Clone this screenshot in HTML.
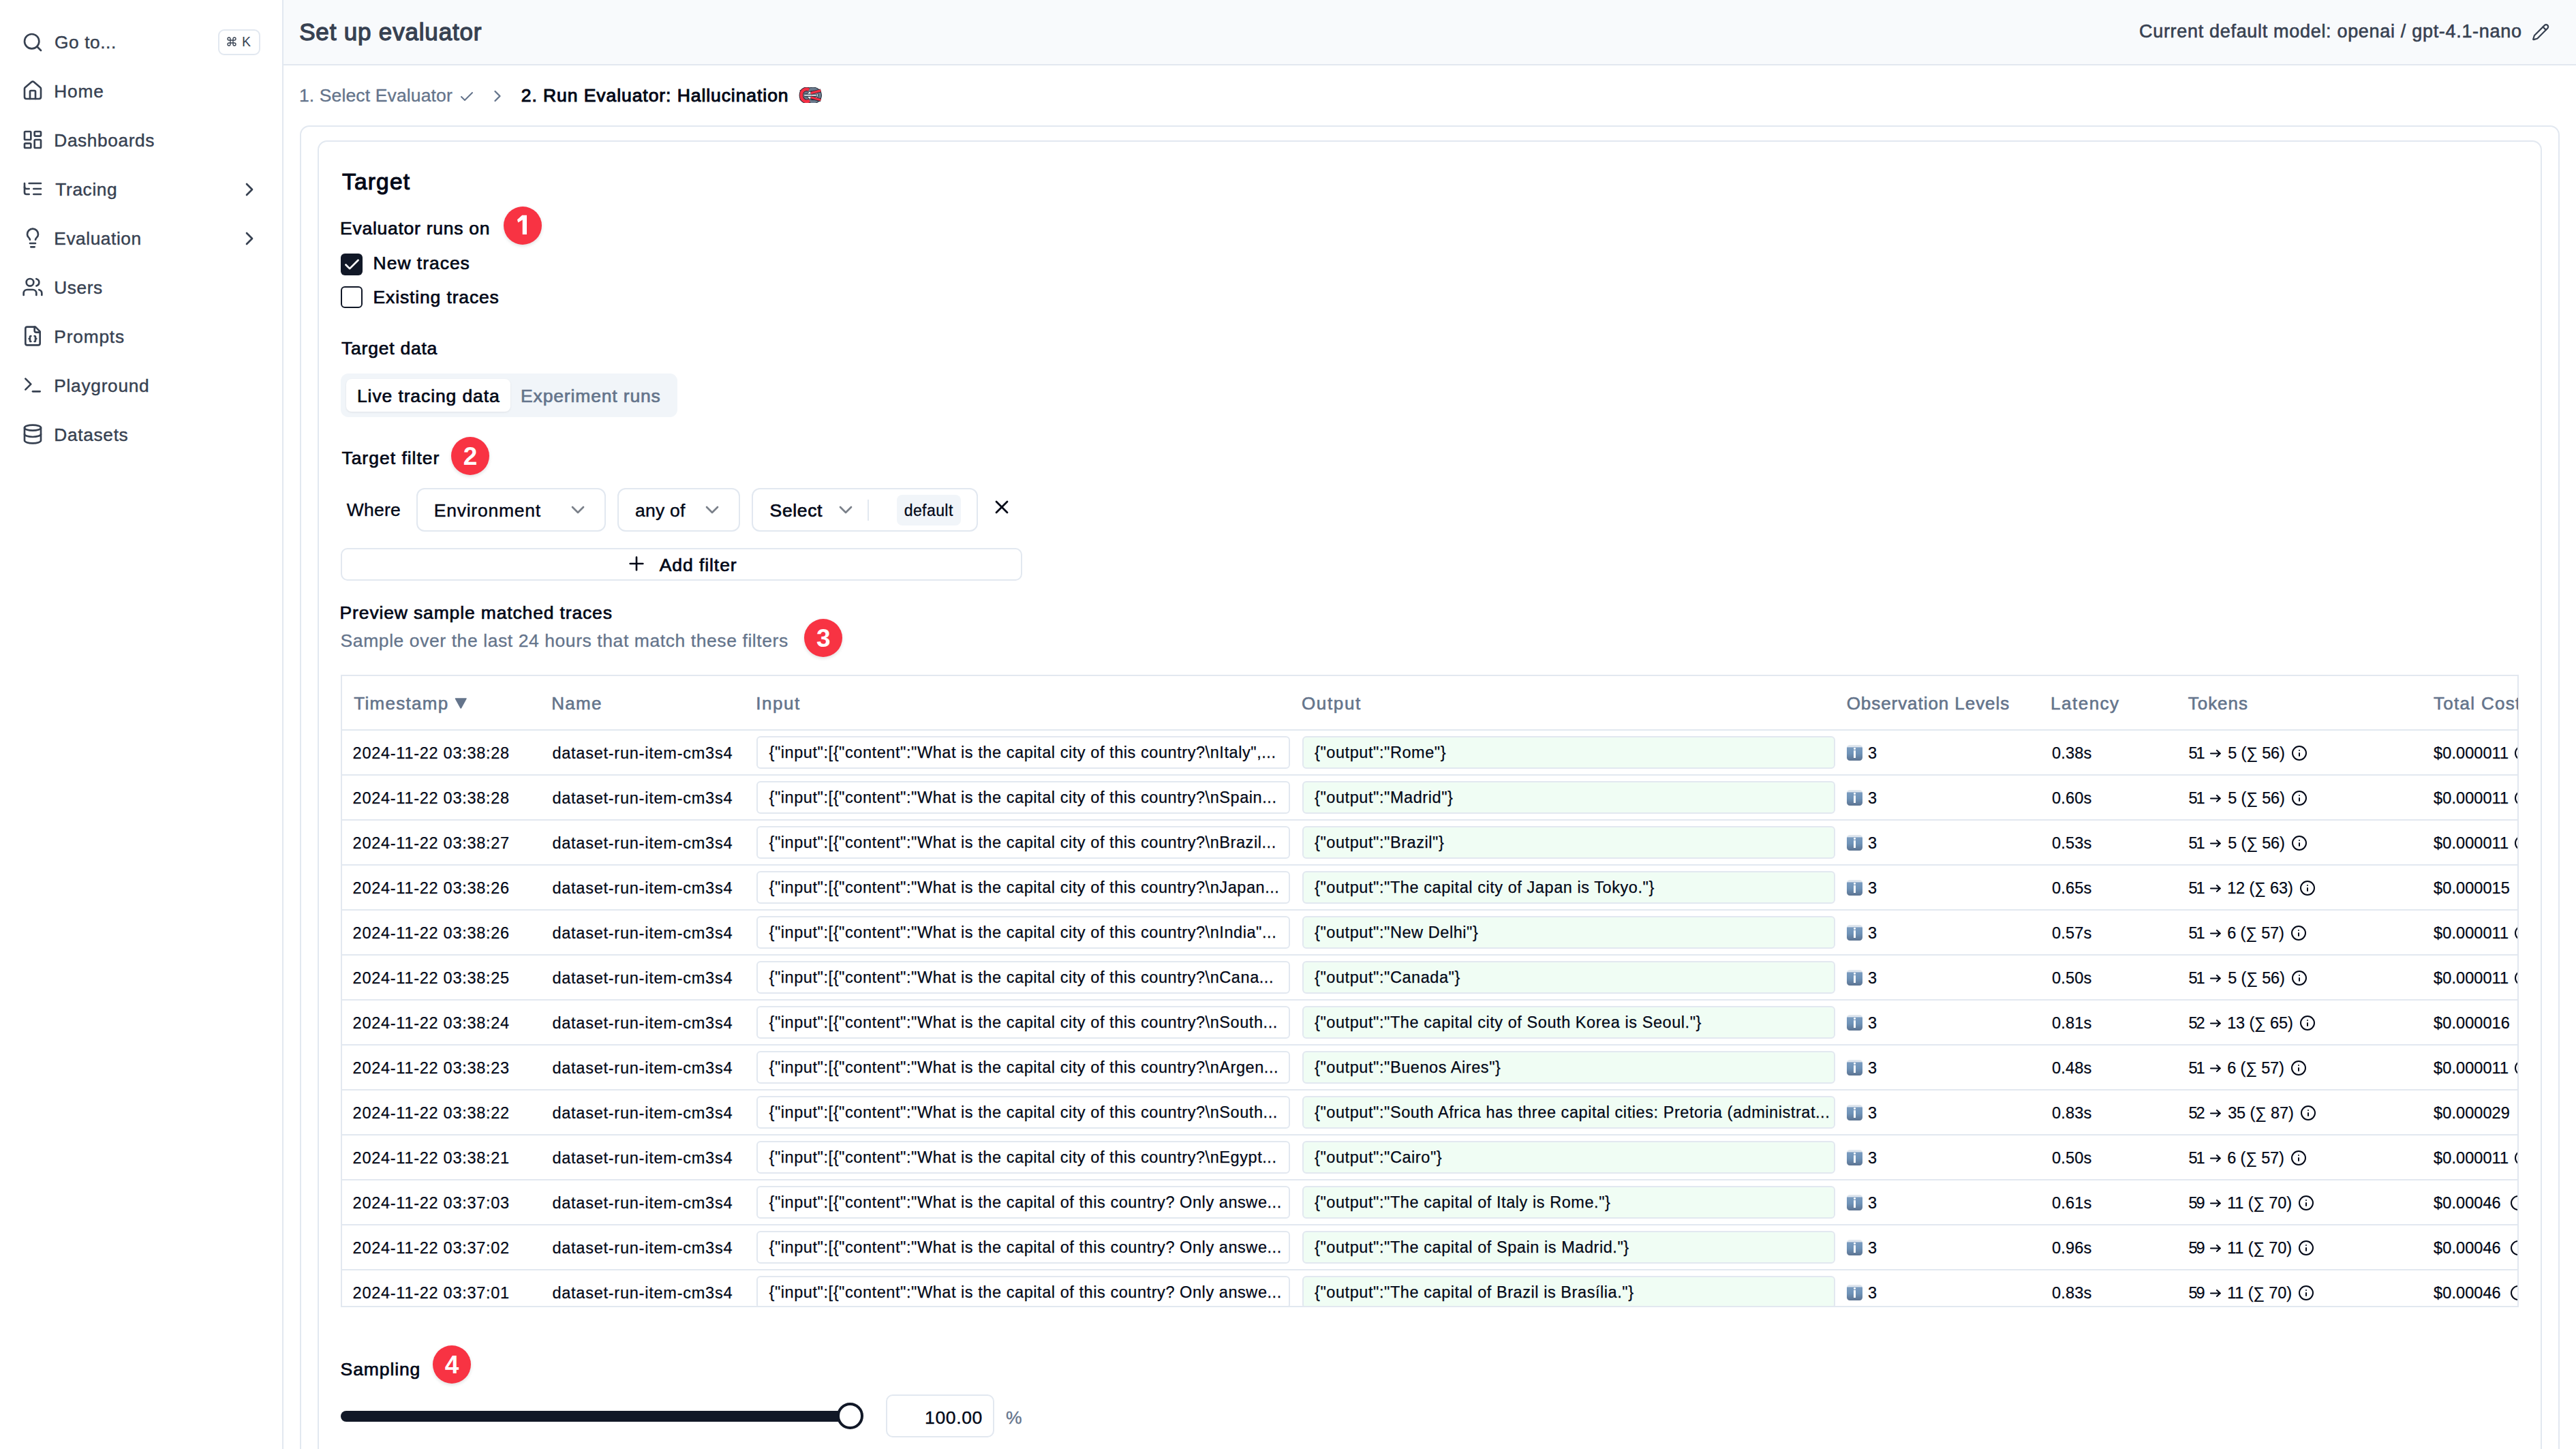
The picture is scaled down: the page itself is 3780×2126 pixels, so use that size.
<!DOCTYPE html>
<html><head><meta charset="utf-8"><style>*{box-sizing:border-box;margin:0;padding:0}
html,body{width:3780px;height:2126px;overflow:hidden;background:#fff;font-family:"Liberation Sans",sans-serif;color:#020817}
.a{position:absolute;white-space:nowrap}
.badge{position:absolute;width:56px;height:56px;border-radius:50%;background:#f83343;color:#fff;font-weight:bold;font-size:37px;line-height:57px;text-align:center;box-shadow:0 2px 5px rgba(0,0,0,.13)}
.emo{width:22.6px;height:22.6px;border-radius:4.5px;background:linear-gradient(#dfe6ee 0,#dfe6ee 14%,#7b9cc0 16%,#6f93b8 55%,#5c7391 100%)}
.emo b{position:absolute;left:9.8px;top:7.5px;width:3px;height:11px;background:#fff}
.emo:before{content:"";position:absolute;left:9.6px;top:4px;width:3.4px;height:3px;border-radius:50%;background:#fff}
</style></head><body>
<div class="a" style="left:0;top:0;width:416px;height:2126px;background:#fff;border-right:2px solid #e2e8f0"></div>
<svg class="a" style="left:32.00px;top:46.00px;width:32.00px;height:32.00px;" viewBox="0 0 24 24" fill="none" stroke="#374151" stroke-width="2" stroke-linecap="round" stroke-linejoin="round"><circle cx="11" cy="11" r="8"/><path d="m21 21-4.3-4.3"/></svg>
<div class="a" style="left:80.00px;letter-spacing:0.582px;top:45.89px;font-size:26.30px;line-height:32px;color:#374151;-webkit-text-stroke:0.40px #374151;">Go to...</div>
<div class="a" style="left:320px;top:43px;width:62px;height:38px;border:2px solid #e2e8f0;border-radius:9px"></div>
<svg class="a" style="left:332.40px;top:53.30px;width:16.00px;height:16.00px;" viewBox="0 0 24 24" fill="none" stroke="#374151" stroke-width="2" stroke-linecap="round" stroke-linejoin="round"><path d="M15 6v12a3 3 0 1 0 3-3H6a3 3 0 1 0 3 3V6a3 3 0 1 0-3 3h12a3 3 0 1 0-3-3"/></svg>
<div class="a" style="left:355.00px;letter-spacing:0.000px;top:50.44px;font-size:19.50px;line-height:23px;color:#374151;">K</div>
<svg class="a" style="left:32.00px;top:117.00px;width:32.00px;height:32.00px;" viewBox="0 0 24 24" fill="none" stroke="#374151" stroke-width="2" stroke-linecap="round" stroke-linejoin="round"><path d="M15 21v-8a1 1 0 0 0-1-1h-4a1 1 0 0 0-1 1v8"/><path d="M3 10a2 2 0 0 1 .709-1.528l7-5.999a2 2 0 0 1 2.582 0l7 5.999A2 2 0 0 1 21 10v9a2 2 0 0 1-2 2H5a2 2 0 0 1-2-2z"/></svg>
<div class="a" style="left:79.30px;letter-spacing:0.826px;top:117.89px;font-size:26.30px;line-height:32px;color:#374151;-webkit-text-stroke:0.40px #374151;">Home</div>
<svg class="a" style="left:32.00px;top:189.00px;width:32.00px;height:32.00px;" viewBox="0 0 24 24" fill="none" stroke="#374151" stroke-width="2" stroke-linecap="round" stroke-linejoin="round"><rect width="7" height="9" x="3" y="3" rx="1"/><rect width="7" height="5" x="14" y="3" rx="1"/><rect width="7" height="9" x="14" y="12" rx="1"/><rect width="7" height="5" x="3" y="16" rx="1"/></svg>
<div class="a" style="left:79.30px;letter-spacing:0.595px;top:189.89px;font-size:26.30px;line-height:32px;color:#374151;-webkit-text-stroke:0.40px #374151;">Dashboards</div>
<svg class="a" style="left:32.00px;top:261.00px;width:32.00px;height:32.00px;" viewBox="0 0 24 24" fill="none" stroke="#374151" stroke-width="2" stroke-linecap="round" stroke-linejoin="round"><path d="M21 12h-8"/><path d="M21 6H8"/><path d="M21 18h-8"/><path d="M3 6v4c0 1.1.9 2 2 2h3"/><path d="M3 10v6c0 1.1.9 2 2 2h3"/></svg>
<div class="a" style="left:81.30px;letter-spacing:0.619px;top:261.89px;font-size:26.30px;line-height:32px;color:#374151;-webkit-text-stroke:0.40px #374151;">Tracing</div>
<svg class="a" style="left:350.00px;top:262.00px;width:32.00px;height:32.00px;" viewBox="0 0 24 24" fill="none" stroke="#374151" stroke-width="2" stroke-linecap="round" stroke-linejoin="round"><path d="m9 18 6-6-6-6"/></svg>
<svg class="a" style="left:32.00px;top:333.00px;width:32.00px;height:32.00px;" viewBox="0 0 24 24" fill="none" stroke="#374151" stroke-width="2" stroke-linecap="round" stroke-linejoin="round"><path d="M15 14c.2-1 .7-1.7 1.5-2.5 1-.9 1.5-2.2 1.5-3.5A6 6 0 0 0 6 8c0 1 .2 2.2 1.5 3.5.7.7 1.3 1.5 1.5 2.5"/><path d="M9 18h6"/><path d="M10 22h4"/></svg>
<div class="a" style="left:79.30px;letter-spacing:0.558px;top:333.89px;font-size:26.30px;line-height:32px;color:#374151;-webkit-text-stroke:0.40px #374151;">Evaluation</div>
<svg class="a" style="left:350.00px;top:334.00px;width:32.00px;height:32.00px;" viewBox="0 0 24 24" fill="none" stroke="#374151" stroke-width="2" stroke-linecap="round" stroke-linejoin="round"><path d="m9 18 6-6-6-6"/></svg>
<svg class="a" style="left:32.00px;top:405.00px;width:32.00px;height:32.00px;" viewBox="0 0 24 24" fill="none" stroke="#374151" stroke-width="2" stroke-linecap="round" stroke-linejoin="round"><path d="M16 21v-2a4 4 0 0 0-4-4H6a4 4 0 0 0-4 4v2"/><circle cx="9" cy="7" r="4"/><path d="M22 21v-2a4 4 0 0 0-3-3.87"/><path d="M16 3.13a4 4 0 0 1 0 7.75"/></svg>
<div class="a" style="left:79.30px;letter-spacing:0.570px;top:405.89px;font-size:26.30px;line-height:32px;color:#374151;-webkit-text-stroke:0.40px #374151;">Users</div>
<svg class="a" style="left:32.00px;top:477.00px;width:32.00px;height:32.00px;" viewBox="0 0 24 24" fill="none" stroke="#374151" stroke-width="2" stroke-linecap="round" stroke-linejoin="round"><path d="M15 2H6a2 2 0 0 0-2 2v16a2 2 0 0 0 2 2h12a2 2 0 0 0 2-2V7Z"/><path d="M14 2v4a2 2 0 0 0 2 2h4"/><path d="M10 12a1 1 0 0 0-1 1v1a1 1 0 0 1-1 1 1 1 0 0 1 1 1v1a1 1 0 0 0 1 1"/><path d="M14 18a1 1 0 0 0 1-1v-1a1 1 0 0 1 1-1 1 1 0 0 1-1-1v-1a1 1 0 0 0-1-1"/></svg>
<div class="a" style="left:79.30px;letter-spacing:0.824px;top:477.89px;font-size:26.30px;line-height:32px;color:#374151;-webkit-text-stroke:0.40px #374151;">Prompts</div>
<svg class="a" style="left:32.00px;top:549.00px;width:32.00px;height:32.00px;" viewBox="0 0 24 24" fill="none" stroke="#374151" stroke-width="2" stroke-linecap="round" stroke-linejoin="round"><polyline points="4 17 10 11 4 5"/><line x1="12" x2="20" y1="19" y2="19"/></svg>
<div class="a" style="left:79.30px;letter-spacing:0.710px;top:549.89px;font-size:26.30px;line-height:32px;color:#374151;-webkit-text-stroke:0.40px #374151;">Playground</div>
<svg class="a" style="left:32.00px;top:621.00px;width:32.00px;height:32.00px;" viewBox="0 0 24 24" fill="none" stroke="#374151" stroke-width="2" stroke-linecap="round" stroke-linejoin="round"><ellipse cx="12" cy="5" rx="9" ry="3"/><path d="M3 5V19A9 3 0 0 0 21 19V5"/><path d="M3 12A9 3 0 0 0 21 12"/></svg>
<div class="a" style="left:79.30px;letter-spacing:0.668px;top:621.89px;font-size:26.30px;line-height:32px;color:#374151;-webkit-text-stroke:0.40px #374151;">Datasets</div>
<div class="a" style="left:416px;top:0;width:3364px;height:96px;background:#f8fafc;border-bottom:2px solid #e2e8f0"></div>
<div class="a" style="left:439.20px;letter-spacing:0.824px;top:26.27px;font-size:35.00px;line-height:42px;color:#374151;-webkit-text-stroke:1.30px #374151;">Set up evaluator</div>
<div class="a" style="left:3139.00px;letter-spacing:0.688px;top:30.04px;font-size:27.00px;line-height:32px;color:#374151;-webkit-text-stroke:0.60px #374151;">Current default model: openai / gpt-4.1-nano</div>
<svg class="a" style="left:3714.80px;top:33.50px;width:26.40px;height:26.40px;" viewBox="0 0 24 24" fill="none" stroke="#374151" stroke-width="2" stroke-linecap="round" stroke-linejoin="round"><path d="M21.174 6.812a1 1 0 0 0-3.986-3.987L3.842 16.174a2 2 0 0 0-.5.83l-1.321 4.352a.5.5 0 0 0 .623.622l4.353-1.32a2 2 0 0 0 .83-.497z"/><path d="m15 5 4 4"/></svg>
<div class="a" style="left:438.90px;letter-spacing:0.133px;top:124.02px;font-size:26.50px;line-height:32px;color:#64748b;-webkit-text-stroke:0.30px #64748b;">1. Select Evaluator</div>
<svg class="a" style="left:673.00px;top:129.50px;width:24.00px;height:24.00px;" viewBox="0 0 24 24" fill="none" stroke="#64748b" stroke-width="2" stroke-linecap="round" stroke-linejoin="round"><path d="M20 6 9 17l-5-5"/></svg>
<svg class="a" style="left:715.70px;top:127.00px;width:28.00px;height:28.00px;" viewBox="0 0 24 24" fill="none" stroke="#64748b" stroke-width="2" stroke-linecap="round" stroke-linejoin="round"><path d="m9 18 6-6-6-6"/></svg>
<div class="a" style="left:764.80px;letter-spacing:0.930px;top:124.02px;font-size:26.50px;line-height:32px;color:#020817;-webkit-text-stroke:1.00px #020817;">2. Run Evaluator: Hallucination</div>
<svg class="a" style="left:1172px;top:128px;width:34px;height:23px" viewBox="0 0 34 23" fill="none" stroke-linecap="butt">
<path d="M2 4.5 L5.5 7 L3.2 9.5Z M2 18.5 L5.5 16 L3.2 13.5Z" fill="#6b7a8c" stroke="#1f2937" stroke-width="1"/>
<path d="M8.5 10 C13 4 17 2.6 21 2.6 C27 2.6 31 7 31 11.8 C31 16.5 27 21.3 21 21.3 C17 21.3 13 19.5 8.5 13.6" stroke="#1f2937" stroke-width="6"/>
<path d="M8.5 10 C13 4 17 2.6 21 2.6 C27 2.6 31 7 31 11.8 C31 16.5 27 21.3 21 21.3 C17 21.3 13 19.5 8.5 13.6" stroke="#6b7a8c" stroke-width="4.2"/>
<path d="M15 3.6 C11 1.6 3.8 3.2 3.8 11.8 C3.8 20.5 11 22.2 16 19.8" stroke="#1f2937" stroke-width="6.4"/>
<path d="M15 3.6 C11 1.6 3.8 3.2 3.8 11.8 C3.8 20.5 11 22.2 16 19.8" stroke="#f43045" stroke-width="4.6"/>
<path d="M7.5 11.8 H27" stroke="#1f2937" stroke-width="4.6"/><path d="M7.5 11.8 H27" stroke="#6b7a8c" stroke-width="3"/><path d="M8.5 11.8 H25.5" stroke="#fff" stroke-width="1.3"/>
<path d="M17.5 8.6 L32.5 4.8 M17.5 14.8 L32.5 18.8" stroke="#1f2937" stroke-width="5"/>
<path d="M17.8 8.6 L32.3 4.9 M17.8 14.8 L32.3 18.7" stroke="#f43045" stroke-width="3.2"/>
</svg>
<div class="a" style="left:440px;top:184px;width:3316px;height:2100px;border:2px solid #e2e8f0;border-radius:14px;background:#fff"></div>
<div class="a" style="left:466px;top:206px;width:3264px;height:2100px;border:2px solid #e2e8f0;border-radius:14px;background:#fff"></div>
<div class="a" style="left:502.00px;letter-spacing:1.180px;top:247.39px;font-size:33.50px;line-height:40px;color:#020817;-webkit-text-stroke:1.10px #020817;">Target</div>
<div class="a" style="left:499.00px;letter-spacing:0.740px;top:318.82px;font-size:26.50px;line-height:32px;color:#020817;-webkit-text-stroke:0.70px #020817;">Evaluator runs on</div>
<div class="badge" style="left:739.0px;top:303.0px"><svg style="position:absolute;left:0;top:0" width="56" height="56" viewBox="0 0 56 56"><path d="M27.2 12.8H34V41H27.7V19.6L21.2 23.6L20 19.3Z" fill="#fff"/></svg></div>
<div class="a" style="left:500px;top:372px;width:32px;height:32px;border-radius:6px;background:#111827"></div>
<svg class="a" style="left:502.50px;top:374.50px;width:27.00px;height:27.00px;" viewBox="0 0 24 24" fill="none" stroke="#fff" stroke-width="2.4" stroke-linecap="round" stroke-linejoin="round"><path d="M20 6 9 17l-5-5"/></svg>
<div class="a" style="left:547.60px;letter-spacing:0.968px;top:369.82px;font-size:26.50px;line-height:32px;color:#020817;-webkit-text-stroke:0.70px #020817;">New traces</div>
<div class="a" style="left:500px;top:420px;width:32px;height:32px;border-radius:6px;border:2.5px solid #111827;background:#fff"></div>
<div class="a" style="left:547.60px;letter-spacing:0.853px;top:420.32px;font-size:26.50px;line-height:32px;color:#020817;-webkit-text-stroke:0.70px #020817;">Existing traces</div>
<div class="a" style="left:501.00px;letter-spacing:0.775px;top:495.12px;font-size:26.50px;line-height:32px;color:#020817;-webkit-text-stroke:0.70px #020817;">Target data</div>
<div class="a" style="left:500px;top:548px;width:494px;height:64px;border-radius:11px;background:#f1f5f9"></div>
<div class="a" style="left:508px;top:556px;width:241px;height:48px;border-radius:8px;background:#fff;box-shadow:0 1px 3px rgba(0,0,0,.08)"></div>
<div class="a" style="left:524.00px;letter-spacing:0.886px;top:565.02px;font-size:26.50px;line-height:32px;color:#020817;-webkit-text-stroke:0.70px #020817;">Live tracing data</div>
<div class="a" style="left:764.00px;letter-spacing:0.851px;top:565.02px;font-size:26.50px;line-height:32px;color:#64748b;-webkit-text-stroke:0.70px #64748b;">Experiment runs</div>
<div class="a" style="left:501.40px;letter-spacing:0.996px;top:655.82px;font-size:26.50px;line-height:32px;color:#020817;-webkit-text-stroke:0.70px #020817;">Target filter</div>
<div class="badge" style="left:662.0px;top:640.6px">2</div>
<div class="a" style="left:508.80px;letter-spacing:0.222px;top:732.42px;font-size:26.50px;line-height:32px;color:#020817;-webkit-text-stroke:0.40px #020817;">Where</div>
<div class="a" style="left:611.0px;top:716.0px;width:278.0px;height:63.5px;border:2px solid #e2e8f0;border-radius:12px;background:#fff;"></div>
<div class="a" style="left:636.80px;letter-spacing:0.750px;top:732.62px;font-size:26.50px;line-height:32px;color:#020817;-webkit-text-stroke:0.42px #020817;">Environment</div>
<svg class="a" style="left:832.00px;top:732.00px;width:32.00px;height:32.00px;" viewBox="0 0 24 24" fill="none" stroke="#7a8089" stroke-width="2" stroke-linecap="round" stroke-linejoin="round"><path d="m6 9 6 6 6-6"/></svg>
<div class="a" style="left:906.0px;top:716.0px;width:180.0px;height:63.5px;border:2px solid #e2e8f0;border-radius:12px;background:#fff;"></div>
<div class="a" style="left:931.90px;letter-spacing:0.255px;top:732.62px;font-size:26.50px;line-height:32px;color:#020817;-webkit-text-stroke:0.42px #020817;">any of</div>
<svg class="a" style="left:1029.10px;top:732.00px;width:32.00px;height:32.00px;" viewBox="0 0 24 24" fill="none" stroke="#7a8089" stroke-width="2" stroke-linecap="round" stroke-linejoin="round"><path d="m6 9 6 6 6-6"/></svg>
<div class="a" style="left:1103.0px;top:716.0px;width:332.0px;height:63.5px;border:2px solid #e2e8f0;border-radius:12px;background:#fff;"></div>
<div class="a" style="left:1129.60px;letter-spacing:0.642px;top:732.62px;font-size:26.50px;line-height:32px;color:#020817;-webkit-text-stroke:0.70px #020817;">Select</div>
<svg class="a" style="left:1225.30px;top:732.00px;width:32.00px;height:32.00px;" viewBox="0 0 24 24" fill="none" stroke="#7a8089" stroke-width="2" stroke-linecap="round" stroke-linejoin="round"><path d="m6 9 6 6 6-6"/></svg>
<div class="a" style="left:1273px;top:732.6px;width:2px;height:31px;background:#e2e8f0"></div>
<div class="a" style="left:1316.0px;top:726.0px;width:94.0px;height:45.0px;border:0px solid #e2e8f0;border-radius:8px;background:#f1f5f9;"></div>
<div class="a" style="left:1326.70px;letter-spacing:0.422px;top:735.13px;font-size:23.00px;line-height:28px;color:#020817;-webkit-text-stroke:0.30px #020817;">default</div>
<svg class="a" style="left:1454.00px;top:728.30px;width:32.00px;height:32.00px;" viewBox="0 0 24 24" fill="none" stroke="#020817" stroke-width="2.1" stroke-linecap="round" stroke-linejoin="round"><path d="M18 6 6 18"/><path d="m6 6 12 12"/></svg>
<div class="a" style="left:500.0px;top:804.0px;width:1000.0px;height:48.0px;border:2px solid #e2e8f0;border-radius:10px;background:#fff;"></div>
<svg class="a" style="left:917.70px;top:811.40px;width:32.00px;height:32.00px;" viewBox="0 0 24 24" fill="none" stroke="#020817" stroke-width="2" stroke-linecap="round" stroke-linejoin="round"><path d="M5 12h14"/><path d="M12 5v14"/></svg>
<div class="a" style="left:967.70px;letter-spacing:0.928px;top:812.82px;font-size:26.50px;line-height:32px;color:#020817;-webkit-text-stroke:0.70px #020817;">Add filter</div>
<div class="a" style="left:498.60px;letter-spacing:0.849px;top:882.82px;font-size:26.50px;line-height:32px;color:#020817;-webkit-text-stroke:0.70px #020817;">Preview sample matched traces</div>
<div class="a" style="left:499.60px;letter-spacing:0.578px;top:923.82px;font-size:26.50px;line-height:32px;color:#64748b;-webkit-text-stroke:0.30px #64748b;">Sample over the last 24 hours that match these filters</div>
<div class="badge" style="left:1180.4px;top:908.0px">3</div>
<div class="a" style="left:500.0px;top:990.0px;width:3196.0px;height:928.0px;border:2px solid #e2e8f0;border-radius:0px;background:transparent;"></div>
<div class="a" style="left:502px;top:1070px;width:3192px;height:2px;background:#e2e8f0"></div>
<div class="a" style="left:519.30px;letter-spacing:1.293px;top:1016.79px;font-size:26.00px;line-height:31px;color:#64748b;-webkit-text-stroke:0.60px #64748b;">Timestamp</div>
<svg class="a" style="left:667px;top:1022.5px;width:18.5px;height:18px" viewBox="0 0 18.5 18"><path d="M1.5 1.2 H17 Q18.3 1.2 17.6 2.4 L10.2 16 Q9.25 17.6 8.3 16 L0.9 2.4 Q0.2 1.2 1.5 1.2Z" fill="#64748b"/></svg>
<div class="a" style="left:809.20px;letter-spacing:1.302px;top:1016.79px;font-size:26.00px;line-height:31px;color:#64748b;-webkit-text-stroke:0.60px #64748b;">Name</div>
<div class="a" style="left:1109.20px;letter-spacing:1.524px;top:1016.79px;font-size:26.00px;line-height:31px;color:#64748b;-webkit-text-stroke:0.60px #64748b;">Input</div>
<div class="a" style="left:1909.90px;letter-spacing:1.655px;top:1016.79px;font-size:26.00px;line-height:31px;color:#64748b;-webkit-text-stroke:0.60px #64748b;">Output</div>
<div class="a" style="left:2709.70px;letter-spacing:0.938px;top:1016.79px;font-size:26.00px;line-height:31px;color:#64748b;-webkit-text-stroke:0.60px #64748b;">Observation Levels</div>
<div class="a" style="left:3009.00px;letter-spacing:1.506px;top:1016.79px;font-size:26.00px;line-height:31px;color:#64748b;-webkit-text-stroke:0.60px #64748b;">Latency</div>
<div class="a" style="left:3210.80px;letter-spacing:0.944px;top:1016.79px;font-size:26.00px;line-height:31px;color:#64748b;-webkit-text-stroke:0.60px #64748b;">Tokens</div>
<div class="a" style="left:3560px;top:1000px;width:134.6px;height:60px;overflow:hidden">
<div class="a" style="left:11.00px;letter-spacing:1.291px;top:16.79px;font-size:26.00px;line-height:31px;color:#64748b;-webkit-text-stroke:0.60px #64748b;">Total Cost</div>
</div>
<div class="a" style="left:502px;top:1072px;width:3192px;height:844px;overflow:hidden">
<div class="a" style="left:15.60px;letter-spacing:0.728px;top:18.76px;font-size:23.50px;line-height:28px;color:#020817;-webkit-text-stroke:0.25px #020817;">2024-11-22 03:38:28</div>
<div class="a" style="left:308.40px;letter-spacing:0.759px;top:18.76px;font-size:23.50px;line-height:28px;color:#020817;-webkit-text-stroke:0.25px #020817;">dataset-run-item-cm3s4</div>
<div class="a" style="left:608.0px;top:8.0px;width:783.0px;height:48.0px;border:2px solid #e2e8f0;border-radius:6px;background:#fff;"></div>
<div class="a" style="left:626.50px;letter-spacing:0.562px;top:17.66px;font-size:23.50px;line-height:28px;color:#020817;-webkit-text-stroke:0.25px #020817;">{"input":[{"content":"What is the capital city of this country?\nItaly",...</div>
<div class="a" style="left:1409.0px;top:8.0px;width:782.0px;height:48.0px;border:2px solid #e2e8f0;border-radius:6px;background:#f0fdf4;"></div>
<div class="a" style="left:1411.0px;top:9.0px;width:778.0px;height:46px;overflow:hidden">
<div class="a" style="left:16.00px;letter-spacing:0.562px;top:8.66px;font-size:23.50px;line-height:28px;color:#020817;-webkit-text-stroke:0.25px #020817;">{"output":"Rome"}</div>
</div>
<div class="a emo" style="left:2208.2px;top:21.0px"><b></b></div>
<div class="a" style="left:2239.00px;letter-spacing:0.000px;top:18.76px;font-size:23.50px;line-height:28px;color:#020817;-webkit-text-stroke:0.25px #020817;">3</div>
<div class="a" style="left:2509.00px;letter-spacing:0.216px;top:18.76px;font-size:23.50px;line-height:28px;color:#020817;-webkit-text-stroke:0.25px #020817;">0.38s</div>
<div class="a" style="left:2709.40px;letter-spacing:-2.070px;top:18.76px;font-size:23.50px;line-height:28px;color:#020817;-webkit-text-stroke:0.25px #020817;">51</div>
<svg class="a" style="left:2740.0px;top:26.8px;width:18px;height:13px" viewBox="0 0 18 13" fill="none" stroke="#020817" stroke-width="2.1" stroke-linecap="round" stroke-linejoin="round"><path d="M2 6.5h14M11 2 15.8 6.5 11 11"/></svg>
<div class="a" style="left:2767.20px;letter-spacing:-0.149px;top:18.76px;font-size:23.50px;line-height:28px;color:#020817;-webkit-text-stroke:0.25px #020817;">5 (∑ 56)</div><svg class="a" style="left:2860.20px;top:20.50px;width:24px;height:24px" viewBox="0 0 24 24" fill="none" stroke="#020817" stroke-width="2" stroke-linecap="round" stroke-linejoin="round"><circle cx="12" cy="12" r="10"/><path d="M12 16v-4"/><path d="M12 8h.01"/></svg>
<div class="a" style="left:3069.10px;letter-spacing:0.079px;top:18.76px;font-size:23.50px;line-height:28px;color:#020817;-webkit-text-stroke:0.25px #020817;">$0.000011</div>
<svg class="a" style="left:3186.50px;top:20.50px;width:24px;height:24px" viewBox="0 0 24 24" fill="none" stroke="#020817" stroke-width="2" stroke-linecap="round" stroke-linejoin="round"><circle cx="12" cy="12" r="10"/><path d="M12 16v-4"/><path d="M12 8h.01"/></svg>
<div class="a" style="left:0;top:64px;width:3192px;height:2px;background:#e2e8f0"></div>
<div class="a" style="left:15.60px;letter-spacing:0.728px;top:84.76px;font-size:23.50px;line-height:28px;color:#020817;-webkit-text-stroke:0.25px #020817;">2024-11-22 03:38:28</div>
<div class="a" style="left:308.40px;letter-spacing:0.759px;top:84.76px;font-size:23.50px;line-height:28px;color:#020817;-webkit-text-stroke:0.25px #020817;">dataset-run-item-cm3s4</div>
<div class="a" style="left:608.0px;top:74.0px;width:783.0px;height:48.0px;border:2px solid #e2e8f0;border-radius:6px;background:#fff;"></div>
<div class="a" style="left:626.50px;letter-spacing:0.562px;top:83.66px;font-size:23.50px;line-height:28px;color:#020817;-webkit-text-stroke:0.25px #020817;">{"input":[{"content":"What is the capital city of this country?\nSpain...</div>
<div class="a" style="left:1409.0px;top:74.0px;width:782.0px;height:48.0px;border:2px solid #e2e8f0;border-radius:6px;background:#f0fdf4;"></div>
<div class="a" style="left:1411.0px;top:75.0px;width:778.0px;height:46px;overflow:hidden">
<div class="a" style="left:16.00px;letter-spacing:0.562px;top:8.66px;font-size:23.50px;line-height:28px;color:#020817;-webkit-text-stroke:0.25px #020817;">{"output":"Madrid"}</div>
</div>
<div class="a emo" style="left:2208.2px;top:87.0px"><b></b></div>
<div class="a" style="left:2239.00px;letter-spacing:0.000px;top:84.76px;font-size:23.50px;line-height:28px;color:#020817;-webkit-text-stroke:0.25px #020817;">3</div>
<div class="a" style="left:2509.00px;letter-spacing:0.216px;top:84.76px;font-size:23.50px;line-height:28px;color:#020817;-webkit-text-stroke:0.25px #020817;">0.60s</div>
<div class="a" style="left:2709.40px;letter-spacing:-2.070px;top:84.76px;font-size:23.50px;line-height:28px;color:#020817;-webkit-text-stroke:0.25px #020817;">51</div>
<svg class="a" style="left:2740.0px;top:92.8px;width:18px;height:13px" viewBox="0 0 18 13" fill="none" stroke="#020817" stroke-width="2.1" stroke-linecap="round" stroke-linejoin="round"><path d="M2 6.5h14M11 2 15.8 6.5 11 11"/></svg>
<div class="a" style="left:2767.20px;letter-spacing:-0.149px;top:84.76px;font-size:23.50px;line-height:28px;color:#020817;-webkit-text-stroke:0.25px #020817;">5 (∑ 56)</div><svg class="a" style="left:2860.20px;top:86.50px;width:24px;height:24px" viewBox="0 0 24 24" fill="none" stroke="#020817" stroke-width="2" stroke-linecap="round" stroke-linejoin="round"><circle cx="12" cy="12" r="10"/><path d="M12 16v-4"/><path d="M12 8h.01"/></svg>
<div class="a" style="left:3069.10px;letter-spacing:0.079px;top:84.76px;font-size:23.50px;line-height:28px;color:#020817;-webkit-text-stroke:0.25px #020817;">$0.000011</div>
<svg class="a" style="left:3186.50px;top:86.50px;width:24px;height:24px" viewBox="0 0 24 24" fill="none" stroke="#020817" stroke-width="2" stroke-linecap="round" stroke-linejoin="round"><circle cx="12" cy="12" r="10"/><path d="M12 16v-4"/><path d="M12 8h.01"/></svg>
<div class="a" style="left:0;top:130px;width:3192px;height:2px;background:#e2e8f0"></div>
<div class="a" style="left:15.60px;letter-spacing:0.728px;top:150.76px;font-size:23.50px;line-height:28px;color:#020817;-webkit-text-stroke:0.25px #020817;">2024-11-22 03:38:27</div>
<div class="a" style="left:308.40px;letter-spacing:0.759px;top:150.76px;font-size:23.50px;line-height:28px;color:#020817;-webkit-text-stroke:0.25px #020817;">dataset-run-item-cm3s4</div>
<div class="a" style="left:608.0px;top:140.0px;width:783.0px;height:48.0px;border:2px solid #e2e8f0;border-radius:6px;background:#fff;"></div>
<div class="a" style="left:626.50px;letter-spacing:0.562px;top:149.66px;font-size:23.50px;line-height:28px;color:#020817;-webkit-text-stroke:0.25px #020817;">{"input":[{"content":"What is the capital city of this country?\nBrazil...</div>
<div class="a" style="left:1409.0px;top:140.0px;width:782.0px;height:48.0px;border:2px solid #e2e8f0;border-radius:6px;background:#f0fdf4;"></div>
<div class="a" style="left:1411.0px;top:141.0px;width:778.0px;height:46px;overflow:hidden">
<div class="a" style="left:16.00px;letter-spacing:0.562px;top:8.66px;font-size:23.50px;line-height:28px;color:#020817;-webkit-text-stroke:0.25px #020817;">{"output":"Brazil"}</div>
</div>
<div class="a emo" style="left:2208.2px;top:153.0px"><b></b></div>
<div class="a" style="left:2239.00px;letter-spacing:0.000px;top:150.76px;font-size:23.50px;line-height:28px;color:#020817;-webkit-text-stroke:0.25px #020817;">3</div>
<div class="a" style="left:2509.00px;letter-spacing:0.216px;top:150.76px;font-size:23.50px;line-height:28px;color:#020817;-webkit-text-stroke:0.25px #020817;">0.53s</div>
<div class="a" style="left:2709.40px;letter-spacing:-2.070px;top:150.76px;font-size:23.50px;line-height:28px;color:#020817;-webkit-text-stroke:0.25px #020817;">51</div>
<svg class="a" style="left:2740.0px;top:158.8px;width:18px;height:13px" viewBox="0 0 18 13" fill="none" stroke="#020817" stroke-width="2.1" stroke-linecap="round" stroke-linejoin="round"><path d="M2 6.5h14M11 2 15.8 6.5 11 11"/></svg>
<div class="a" style="left:2767.20px;letter-spacing:-0.149px;top:150.76px;font-size:23.50px;line-height:28px;color:#020817;-webkit-text-stroke:0.25px #020817;">5 (∑ 56)</div><svg class="a" style="left:2860.20px;top:152.50px;width:24px;height:24px" viewBox="0 0 24 24" fill="none" stroke="#020817" stroke-width="2" stroke-linecap="round" stroke-linejoin="round"><circle cx="12" cy="12" r="10"/><path d="M12 16v-4"/><path d="M12 8h.01"/></svg>
<div class="a" style="left:3069.10px;letter-spacing:0.079px;top:150.76px;font-size:23.50px;line-height:28px;color:#020817;-webkit-text-stroke:0.25px #020817;">$0.000011</div>
<svg class="a" style="left:3186.50px;top:152.50px;width:24px;height:24px" viewBox="0 0 24 24" fill="none" stroke="#020817" stroke-width="2" stroke-linecap="round" stroke-linejoin="round"><circle cx="12" cy="12" r="10"/><path d="M12 16v-4"/><path d="M12 8h.01"/></svg>
<div class="a" style="left:0;top:196px;width:3192px;height:2px;background:#e2e8f0"></div>
<div class="a" style="left:15.60px;letter-spacing:0.728px;top:216.76px;font-size:23.50px;line-height:28px;color:#020817;-webkit-text-stroke:0.25px #020817;">2024-11-22 03:38:26</div>
<div class="a" style="left:308.40px;letter-spacing:0.759px;top:216.76px;font-size:23.50px;line-height:28px;color:#020817;-webkit-text-stroke:0.25px #020817;">dataset-run-item-cm3s4</div>
<div class="a" style="left:608.0px;top:206.0px;width:783.0px;height:48.0px;border:2px solid #e2e8f0;border-radius:6px;background:#fff;"></div>
<div class="a" style="left:626.50px;letter-spacing:0.562px;top:215.66px;font-size:23.50px;line-height:28px;color:#020817;-webkit-text-stroke:0.25px #020817;">{"input":[{"content":"What is the capital city of this country?\nJapan...</div>
<div class="a" style="left:1409.0px;top:206.0px;width:782.0px;height:48.0px;border:2px solid #e2e8f0;border-radius:6px;background:#f0fdf4;"></div>
<div class="a" style="left:1411.0px;top:207.0px;width:778.0px;height:46px;overflow:hidden">
<div class="a" style="left:16.00px;letter-spacing:0.562px;top:8.66px;font-size:23.50px;line-height:28px;color:#020817;-webkit-text-stroke:0.25px #020817;">{"output":"The capital city of Japan is Tokyo."}</div>
</div>
<div class="a emo" style="left:2208.2px;top:219.0px"><b></b></div>
<div class="a" style="left:2239.00px;letter-spacing:0.000px;top:216.76px;font-size:23.50px;line-height:28px;color:#020817;-webkit-text-stroke:0.25px #020817;">3</div>
<div class="a" style="left:2509.00px;letter-spacing:0.216px;top:216.76px;font-size:23.50px;line-height:28px;color:#020817;-webkit-text-stroke:0.25px #020817;">0.65s</div>
<div class="a" style="left:2709.40px;letter-spacing:-2.070px;top:216.76px;font-size:23.50px;line-height:28px;color:#020817;-webkit-text-stroke:0.25px #020817;">51</div>
<svg class="a" style="left:2740.0px;top:224.8px;width:18px;height:13px" viewBox="0 0 18 13" fill="none" stroke="#020817" stroke-width="2.1" stroke-linecap="round" stroke-linejoin="round"><path d="M2 6.5h14M11 2 15.8 6.5 11 11"/></svg>
<div class="a" style="left:2766.20px;letter-spacing:-0.149px;top:216.76px;font-size:23.50px;line-height:28px;color:#020817;-webkit-text-stroke:0.25px #020817;">12 (∑ 63)</div><svg class="a" style="left:2872.12px;top:218.50px;width:24px;height:24px" viewBox="0 0 24 24" fill="none" stroke="#020817" stroke-width="2" stroke-linecap="round" stroke-linejoin="round"><circle cx="12" cy="12" r="10"/><path d="M12 16v-4"/><path d="M12 8h.01"/></svg>
<div class="a" style="left:3069.10px;letter-spacing:0.079px;top:216.76px;font-size:23.50px;line-height:28px;color:#020817;-webkit-text-stroke:0.25px #020817;">$0.000015</div>
<div class="a" style="left:0;top:262px;width:3192px;height:2px;background:#e2e8f0"></div>
<div class="a" style="left:15.60px;letter-spacing:0.728px;top:282.76px;font-size:23.50px;line-height:28px;color:#020817;-webkit-text-stroke:0.25px #020817;">2024-11-22 03:38:26</div>
<div class="a" style="left:308.40px;letter-spacing:0.759px;top:282.76px;font-size:23.50px;line-height:28px;color:#020817;-webkit-text-stroke:0.25px #020817;">dataset-run-item-cm3s4</div>
<div class="a" style="left:608.0px;top:272.0px;width:783.0px;height:48.0px;border:2px solid #e2e8f0;border-radius:6px;background:#fff;"></div>
<div class="a" style="left:626.50px;letter-spacing:0.562px;top:281.66px;font-size:23.50px;line-height:28px;color:#020817;-webkit-text-stroke:0.25px #020817;">{"input":[{"content":"What is the capital city of this country?\nIndia"...</div>
<div class="a" style="left:1409.0px;top:272.0px;width:782.0px;height:48.0px;border:2px solid #e2e8f0;border-radius:6px;background:#f0fdf4;"></div>
<div class="a" style="left:1411.0px;top:273.0px;width:778.0px;height:46px;overflow:hidden">
<div class="a" style="left:16.00px;letter-spacing:0.562px;top:8.66px;font-size:23.50px;line-height:28px;color:#020817;-webkit-text-stroke:0.25px #020817;">{"output":"New Delhi"}</div>
</div>
<div class="a emo" style="left:2208.2px;top:285.0px"><b></b></div>
<div class="a" style="left:2239.00px;letter-spacing:0.000px;top:282.76px;font-size:23.50px;line-height:28px;color:#020817;-webkit-text-stroke:0.25px #020817;">3</div>
<div class="a" style="left:2509.00px;letter-spacing:0.216px;top:282.76px;font-size:23.50px;line-height:28px;color:#020817;-webkit-text-stroke:0.25px #020817;">0.57s</div>
<div class="a" style="left:2709.40px;letter-spacing:-2.070px;top:282.76px;font-size:23.50px;line-height:28px;color:#020817;-webkit-text-stroke:0.25px #020817;">51</div>
<svg class="a" style="left:2740.0px;top:290.8px;width:18px;height:13px" viewBox="0 0 18 13" fill="none" stroke="#020817" stroke-width="2.1" stroke-linecap="round" stroke-linejoin="round"><path d="M2 6.5h14M11 2 15.8 6.5 11 11"/></svg>
<div class="a" style="left:2766.20px;letter-spacing:-0.149px;top:282.76px;font-size:23.50px;line-height:28px;color:#020817;-webkit-text-stroke:0.25px #020817;">6 (∑ 57)</div><svg class="a" style="left:2859.20px;top:284.50px;width:24px;height:24px" viewBox="0 0 24 24" fill="none" stroke="#020817" stroke-width="2" stroke-linecap="round" stroke-linejoin="round"><circle cx="12" cy="12" r="10"/><path d="M12 16v-4"/><path d="M12 8h.01"/></svg>
<div class="a" style="left:3069.10px;letter-spacing:0.079px;top:282.76px;font-size:23.50px;line-height:28px;color:#020817;-webkit-text-stroke:0.25px #020817;">$0.000011</div>
<svg class="a" style="left:3186.50px;top:284.50px;width:24px;height:24px" viewBox="0 0 24 24" fill="none" stroke="#020817" stroke-width="2" stroke-linecap="round" stroke-linejoin="round"><circle cx="12" cy="12" r="10"/><path d="M12 16v-4"/><path d="M12 8h.01"/></svg>
<div class="a" style="left:0;top:328px;width:3192px;height:2px;background:#e2e8f0"></div>
<div class="a" style="left:15.60px;letter-spacing:0.728px;top:348.76px;font-size:23.50px;line-height:28px;color:#020817;-webkit-text-stroke:0.25px #020817;">2024-11-22 03:38:25</div>
<div class="a" style="left:308.40px;letter-spacing:0.759px;top:348.76px;font-size:23.50px;line-height:28px;color:#020817;-webkit-text-stroke:0.25px #020817;">dataset-run-item-cm3s4</div>
<div class="a" style="left:608.0px;top:338.0px;width:783.0px;height:48.0px;border:2px solid #e2e8f0;border-radius:6px;background:#fff;"></div>
<div class="a" style="left:626.50px;letter-spacing:0.562px;top:347.66px;font-size:23.50px;line-height:28px;color:#020817;-webkit-text-stroke:0.25px #020817;">{"input":[{"content":"What is the capital city of this country?\nCana...</div>
<div class="a" style="left:1409.0px;top:338.0px;width:782.0px;height:48.0px;border:2px solid #e2e8f0;border-radius:6px;background:#f0fdf4;"></div>
<div class="a" style="left:1411.0px;top:339.0px;width:778.0px;height:46px;overflow:hidden">
<div class="a" style="left:16.00px;letter-spacing:0.562px;top:8.66px;font-size:23.50px;line-height:28px;color:#020817;-webkit-text-stroke:0.25px #020817;">{"output":"Canada"}</div>
</div>
<div class="a emo" style="left:2208.2px;top:351.0px"><b></b></div>
<div class="a" style="left:2239.00px;letter-spacing:0.000px;top:348.76px;font-size:23.50px;line-height:28px;color:#020817;-webkit-text-stroke:0.25px #020817;">3</div>
<div class="a" style="left:2509.00px;letter-spacing:0.216px;top:348.76px;font-size:23.50px;line-height:28px;color:#020817;-webkit-text-stroke:0.25px #020817;">0.50s</div>
<div class="a" style="left:2709.40px;letter-spacing:-2.070px;top:348.76px;font-size:23.50px;line-height:28px;color:#020817;-webkit-text-stroke:0.25px #020817;">51</div>
<svg class="a" style="left:2740.0px;top:356.8px;width:18px;height:13px" viewBox="0 0 18 13" fill="none" stroke="#020817" stroke-width="2.1" stroke-linecap="round" stroke-linejoin="round"><path d="M2 6.5h14M11 2 15.8 6.5 11 11"/></svg>
<div class="a" style="left:2767.20px;letter-spacing:-0.149px;top:348.76px;font-size:23.50px;line-height:28px;color:#020817;-webkit-text-stroke:0.25px #020817;">5 (∑ 56)</div><svg class="a" style="left:2860.20px;top:350.50px;width:24px;height:24px" viewBox="0 0 24 24" fill="none" stroke="#020817" stroke-width="2" stroke-linecap="round" stroke-linejoin="round"><circle cx="12" cy="12" r="10"/><path d="M12 16v-4"/><path d="M12 8h.01"/></svg>
<div class="a" style="left:3069.10px;letter-spacing:0.079px;top:348.76px;font-size:23.50px;line-height:28px;color:#020817;-webkit-text-stroke:0.25px #020817;">$0.000011</div>
<svg class="a" style="left:3186.50px;top:350.50px;width:24px;height:24px" viewBox="0 0 24 24" fill="none" stroke="#020817" stroke-width="2" stroke-linecap="round" stroke-linejoin="round"><circle cx="12" cy="12" r="10"/><path d="M12 16v-4"/><path d="M12 8h.01"/></svg>
<div class="a" style="left:0;top:394px;width:3192px;height:2px;background:#e2e8f0"></div>
<div class="a" style="left:15.60px;letter-spacing:0.728px;top:414.76px;font-size:23.50px;line-height:28px;color:#020817;-webkit-text-stroke:0.25px #020817;">2024-11-22 03:38:24</div>
<div class="a" style="left:308.40px;letter-spacing:0.759px;top:414.76px;font-size:23.50px;line-height:28px;color:#020817;-webkit-text-stroke:0.25px #020817;">dataset-run-item-cm3s4</div>
<div class="a" style="left:608.0px;top:404.0px;width:783.0px;height:48.0px;border:2px solid #e2e8f0;border-radius:6px;background:#fff;"></div>
<div class="a" style="left:626.50px;letter-spacing:0.562px;top:413.66px;font-size:23.50px;line-height:28px;color:#020817;-webkit-text-stroke:0.25px #020817;">{"input":[{"content":"What is the capital city of this country?\nSouth...</div>
<div class="a" style="left:1409.0px;top:404.0px;width:782.0px;height:48.0px;border:2px solid #e2e8f0;border-radius:6px;background:#f0fdf4;"></div>
<div class="a" style="left:1411.0px;top:405.0px;width:778.0px;height:46px;overflow:hidden">
<div class="a" style="left:16.00px;letter-spacing:0.562px;top:8.66px;font-size:23.50px;line-height:28px;color:#020817;-webkit-text-stroke:0.25px #020817;">{"output":"The capital city of South Korea is Seoul."}</div>
</div>
<div class="a emo" style="left:2208.2px;top:417.0px"><b></b></div>
<div class="a" style="left:2239.00px;letter-spacing:0.000px;top:414.76px;font-size:23.50px;line-height:28px;color:#020817;-webkit-text-stroke:0.25px #020817;">3</div>
<div class="a" style="left:2509.00px;letter-spacing:0.216px;top:414.76px;font-size:23.50px;line-height:28px;color:#020817;-webkit-text-stroke:0.25px #020817;">0.81s</div>
<div class="a" style="left:2709.40px;letter-spacing:-2.070px;top:414.76px;font-size:23.50px;line-height:28px;color:#020817;-webkit-text-stroke:0.25px #020817;">52</div>
<svg class="a" style="left:2740.0px;top:422.8px;width:18px;height:13px" viewBox="0 0 18 13" fill="none" stroke="#020817" stroke-width="2.1" stroke-linecap="round" stroke-linejoin="round"><path d="M2 6.5h14M11 2 15.8 6.5 11 11"/></svg>
<div class="a" style="left:2766.20px;letter-spacing:-0.149px;top:414.76px;font-size:23.50px;line-height:28px;color:#020817;-webkit-text-stroke:0.25px #020817;">13 (∑ 65)</div><svg class="a" style="left:2872.12px;top:416.50px;width:24px;height:24px" viewBox="0 0 24 24" fill="none" stroke="#020817" stroke-width="2" stroke-linecap="round" stroke-linejoin="round"><circle cx="12" cy="12" r="10"/><path d="M12 16v-4"/><path d="M12 8h.01"/></svg>
<div class="a" style="left:3069.10px;letter-spacing:0.079px;top:414.76px;font-size:23.50px;line-height:28px;color:#020817;-webkit-text-stroke:0.25px #020817;">$0.000016</div>
<div class="a" style="left:0;top:460px;width:3192px;height:2px;background:#e2e8f0"></div>
<div class="a" style="left:15.60px;letter-spacing:0.728px;top:480.76px;font-size:23.50px;line-height:28px;color:#020817;-webkit-text-stroke:0.25px #020817;">2024-11-22 03:38:23</div>
<div class="a" style="left:308.40px;letter-spacing:0.759px;top:480.76px;font-size:23.50px;line-height:28px;color:#020817;-webkit-text-stroke:0.25px #020817;">dataset-run-item-cm3s4</div>
<div class="a" style="left:608.0px;top:470.0px;width:783.0px;height:48.0px;border:2px solid #e2e8f0;border-radius:6px;background:#fff;"></div>
<div class="a" style="left:626.50px;letter-spacing:0.562px;top:479.66px;font-size:23.50px;line-height:28px;color:#020817;-webkit-text-stroke:0.25px #020817;">{"input":[{"content":"What is the capital city of this country?\nArgen...</div>
<div class="a" style="left:1409.0px;top:470.0px;width:782.0px;height:48.0px;border:2px solid #e2e8f0;border-radius:6px;background:#f0fdf4;"></div>
<div class="a" style="left:1411.0px;top:471.0px;width:778.0px;height:46px;overflow:hidden">
<div class="a" style="left:16.00px;letter-spacing:0.562px;top:8.66px;font-size:23.50px;line-height:28px;color:#020817;-webkit-text-stroke:0.25px #020817;">{"output":"Buenos Aires"}</div>
</div>
<div class="a emo" style="left:2208.2px;top:483.0px"><b></b></div>
<div class="a" style="left:2239.00px;letter-spacing:0.000px;top:480.76px;font-size:23.50px;line-height:28px;color:#020817;-webkit-text-stroke:0.25px #020817;">3</div>
<div class="a" style="left:2509.00px;letter-spacing:0.216px;top:480.76px;font-size:23.50px;line-height:28px;color:#020817;-webkit-text-stroke:0.25px #020817;">0.48s</div>
<div class="a" style="left:2709.40px;letter-spacing:-2.070px;top:480.76px;font-size:23.50px;line-height:28px;color:#020817;-webkit-text-stroke:0.25px #020817;">51</div>
<svg class="a" style="left:2740.0px;top:488.8px;width:18px;height:13px" viewBox="0 0 18 13" fill="none" stroke="#020817" stroke-width="2.1" stroke-linecap="round" stroke-linejoin="round"><path d="M2 6.5h14M11 2 15.8 6.5 11 11"/></svg>
<div class="a" style="left:2766.20px;letter-spacing:-0.149px;top:480.76px;font-size:23.50px;line-height:28px;color:#020817;-webkit-text-stroke:0.25px #020817;">6 (∑ 57)</div><svg class="a" style="left:2859.20px;top:482.50px;width:24px;height:24px" viewBox="0 0 24 24" fill="none" stroke="#020817" stroke-width="2" stroke-linecap="round" stroke-linejoin="round"><circle cx="12" cy="12" r="10"/><path d="M12 16v-4"/><path d="M12 8h.01"/></svg>
<div class="a" style="left:3069.10px;letter-spacing:0.079px;top:480.76px;font-size:23.50px;line-height:28px;color:#020817;-webkit-text-stroke:0.25px #020817;">$0.000011</div>
<svg class="a" style="left:3186.50px;top:482.50px;width:24px;height:24px" viewBox="0 0 24 24" fill="none" stroke="#020817" stroke-width="2" stroke-linecap="round" stroke-linejoin="round"><circle cx="12" cy="12" r="10"/><path d="M12 16v-4"/><path d="M12 8h.01"/></svg>
<div class="a" style="left:0;top:526px;width:3192px;height:2px;background:#e2e8f0"></div>
<div class="a" style="left:15.60px;letter-spacing:0.728px;top:546.76px;font-size:23.50px;line-height:28px;color:#020817;-webkit-text-stroke:0.25px #020817;">2024-11-22 03:38:22</div>
<div class="a" style="left:308.40px;letter-spacing:0.759px;top:546.76px;font-size:23.50px;line-height:28px;color:#020817;-webkit-text-stroke:0.25px #020817;">dataset-run-item-cm3s4</div>
<div class="a" style="left:608.0px;top:536.0px;width:783.0px;height:48.0px;border:2px solid #e2e8f0;border-radius:6px;background:#fff;"></div>
<div class="a" style="left:626.50px;letter-spacing:0.562px;top:545.66px;font-size:23.50px;line-height:28px;color:#020817;-webkit-text-stroke:0.25px #020817;">{"input":[{"content":"What is the capital city of this country?\nSouth...</div>
<div class="a" style="left:1409.0px;top:536.0px;width:782.0px;height:48.0px;border:2px solid #e2e8f0;border-radius:6px;background:#f0fdf4;"></div>
<div class="a" style="left:1411.0px;top:537.0px;width:778.0px;height:46px;overflow:hidden">
<div class="a" style="left:16.00px;letter-spacing:0.562px;top:8.66px;font-size:23.50px;line-height:28px;color:#020817;-webkit-text-stroke:0.25px #020817;">{"output":"South Africa has three capital cities: Pretoria (administrat...</div>
</div>
<div class="a emo" style="left:2208.2px;top:549.0px"><b></b></div>
<div class="a" style="left:2239.00px;letter-spacing:0.000px;top:546.76px;font-size:23.50px;line-height:28px;color:#020817;-webkit-text-stroke:0.25px #020817;">3</div>
<div class="a" style="left:2509.00px;letter-spacing:0.216px;top:546.76px;font-size:23.50px;line-height:28px;color:#020817;-webkit-text-stroke:0.25px #020817;">0.83s</div>
<div class="a" style="left:2709.40px;letter-spacing:-2.070px;top:546.76px;font-size:23.50px;line-height:28px;color:#020817;-webkit-text-stroke:0.25px #020817;">52</div>
<svg class="a" style="left:2740.0px;top:554.8px;width:18px;height:13px" viewBox="0 0 18 13" fill="none" stroke="#020817" stroke-width="2.1" stroke-linecap="round" stroke-linejoin="round"><path d="M2 6.5h14M11 2 15.8 6.5 11 11"/></svg>
<div class="a" style="left:2767.20px;letter-spacing:-0.149px;top:546.76px;font-size:23.50px;line-height:28px;color:#020817;-webkit-text-stroke:0.25px #020817;">35 (∑ 87)</div><svg class="a" style="left:2873.12px;top:548.50px;width:24px;height:24px" viewBox="0 0 24 24" fill="none" stroke="#020817" stroke-width="2" stroke-linecap="round" stroke-linejoin="round"><circle cx="12" cy="12" r="10"/><path d="M12 16v-4"/><path d="M12 8h.01"/></svg>
<div class="a" style="left:3069.10px;letter-spacing:0.079px;top:546.76px;font-size:23.50px;line-height:28px;color:#020817;-webkit-text-stroke:0.25px #020817;">$0.000029</div>
<div class="a" style="left:0;top:592px;width:3192px;height:2px;background:#e2e8f0"></div>
<div class="a" style="left:15.60px;letter-spacing:0.728px;top:612.76px;font-size:23.50px;line-height:28px;color:#020817;-webkit-text-stroke:0.25px #020817;">2024-11-22 03:38:21</div>
<div class="a" style="left:308.40px;letter-spacing:0.759px;top:612.76px;font-size:23.50px;line-height:28px;color:#020817;-webkit-text-stroke:0.25px #020817;">dataset-run-item-cm3s4</div>
<div class="a" style="left:608.0px;top:602.0px;width:783.0px;height:48.0px;border:2px solid #e2e8f0;border-radius:6px;background:#fff;"></div>
<div class="a" style="left:626.50px;letter-spacing:0.562px;top:611.66px;font-size:23.50px;line-height:28px;color:#020817;-webkit-text-stroke:0.25px #020817;">{"input":[{"content":"What is the capital city of this country?\nEgypt...</div>
<div class="a" style="left:1409.0px;top:602.0px;width:782.0px;height:48.0px;border:2px solid #e2e8f0;border-radius:6px;background:#f0fdf4;"></div>
<div class="a" style="left:1411.0px;top:603.0px;width:778.0px;height:46px;overflow:hidden">
<div class="a" style="left:16.00px;letter-spacing:0.562px;top:8.66px;font-size:23.50px;line-height:28px;color:#020817;-webkit-text-stroke:0.25px #020817;">{"output":"Cairo"}</div>
</div>
<div class="a emo" style="left:2208.2px;top:615.0px"><b></b></div>
<div class="a" style="left:2239.00px;letter-spacing:0.000px;top:612.76px;font-size:23.50px;line-height:28px;color:#020817;-webkit-text-stroke:0.25px #020817;">3</div>
<div class="a" style="left:2509.00px;letter-spacing:0.216px;top:612.76px;font-size:23.50px;line-height:28px;color:#020817;-webkit-text-stroke:0.25px #020817;">0.50s</div>
<div class="a" style="left:2709.40px;letter-spacing:-2.070px;top:612.76px;font-size:23.50px;line-height:28px;color:#020817;-webkit-text-stroke:0.25px #020817;">51</div>
<svg class="a" style="left:2740.0px;top:620.8px;width:18px;height:13px" viewBox="0 0 18 13" fill="none" stroke="#020817" stroke-width="2.1" stroke-linecap="round" stroke-linejoin="round"><path d="M2 6.5h14M11 2 15.8 6.5 11 11"/></svg>
<div class="a" style="left:2766.20px;letter-spacing:-0.149px;top:612.76px;font-size:23.50px;line-height:28px;color:#020817;-webkit-text-stroke:0.25px #020817;">6 (∑ 57)</div><svg class="a" style="left:2859.20px;top:614.50px;width:24px;height:24px" viewBox="0 0 24 24" fill="none" stroke="#020817" stroke-width="2" stroke-linecap="round" stroke-linejoin="round"><circle cx="12" cy="12" r="10"/><path d="M12 16v-4"/><path d="M12 8h.01"/></svg>
<div class="a" style="left:3069.10px;letter-spacing:0.079px;top:612.76px;font-size:23.50px;line-height:28px;color:#020817;-webkit-text-stroke:0.25px #020817;">$0.000011</div>
<svg class="a" style="left:3186.50px;top:614.50px;width:24px;height:24px" viewBox="0 0 24 24" fill="none" stroke="#020817" stroke-width="2" stroke-linecap="round" stroke-linejoin="round"><circle cx="12" cy="12" r="10"/><path d="M12 16v-4"/><path d="M12 8h.01"/></svg>
<div class="a" style="left:0;top:658px;width:3192px;height:2px;background:#e2e8f0"></div>
<div class="a" style="left:15.60px;letter-spacing:0.728px;top:678.76px;font-size:23.50px;line-height:28px;color:#020817;-webkit-text-stroke:0.25px #020817;">2024-11-22 03:37:03</div>
<div class="a" style="left:308.40px;letter-spacing:0.759px;top:678.76px;font-size:23.50px;line-height:28px;color:#020817;-webkit-text-stroke:0.25px #020817;">dataset-run-item-cm3s4</div>
<div class="a" style="left:608.0px;top:668.0px;width:783.0px;height:48.0px;border:2px solid #e2e8f0;border-radius:6px;background:#fff;"></div>
<div class="a" style="left:626.50px;letter-spacing:0.562px;top:677.66px;font-size:23.50px;line-height:28px;color:#020817;-webkit-text-stroke:0.25px #020817;">{"input":[{"content":"What is the capital of this country? Only answe...</div>
<div class="a" style="left:1409.0px;top:668.0px;width:782.0px;height:48.0px;border:2px solid #e2e8f0;border-radius:6px;background:#f0fdf4;"></div>
<div class="a" style="left:1411.0px;top:669.0px;width:778.0px;height:46px;overflow:hidden">
<div class="a" style="left:16.00px;letter-spacing:0.562px;top:8.66px;font-size:23.50px;line-height:28px;color:#020817;-webkit-text-stroke:0.25px #020817;">{"output":"The capital of Italy is Rome."}</div>
</div>
<div class="a emo" style="left:2208.2px;top:681.0px"><b></b></div>
<div class="a" style="left:2239.00px;letter-spacing:0.000px;top:678.76px;font-size:23.50px;line-height:28px;color:#020817;-webkit-text-stroke:0.25px #020817;">3</div>
<div class="a" style="left:2509.00px;letter-spacing:0.216px;top:678.76px;font-size:23.50px;line-height:28px;color:#020817;-webkit-text-stroke:0.25px #020817;">0.61s</div>
<div class="a" style="left:2709.40px;letter-spacing:-2.070px;top:678.76px;font-size:23.50px;line-height:28px;color:#020817;-webkit-text-stroke:0.25px #020817;">59</div>
<svg class="a" style="left:2740.0px;top:686.8px;width:18px;height:13px" viewBox="0 0 18 13" fill="none" stroke="#020817" stroke-width="2.1" stroke-linecap="round" stroke-linejoin="round"><path d="M2 6.5h14M11 2 15.8 6.5 11 11"/></svg>
<div class="a" style="left:2766.20px;letter-spacing:-0.149px;top:678.76px;font-size:23.50px;line-height:28px;color:#020817;-webkit-text-stroke:0.25px #020817;">11 (∑ 70)</div><svg class="a" style="left:2870.38px;top:680.50px;width:24px;height:24px" viewBox="0 0 24 24" fill="none" stroke="#020817" stroke-width="2" stroke-linecap="round" stroke-linejoin="round"><circle cx="12" cy="12" r="10"/><path d="M12 16v-4"/><path d="M12 8h.01"/></svg>
<div class="a" style="left:3069.10px;letter-spacing:0.079px;top:678.76px;font-size:23.50px;line-height:28px;color:#020817;-webkit-text-stroke:0.25px #020817;">$0.00046</div>
<svg class="a" style="left:3181.00px;top:680.50px;width:24px;height:24px" viewBox="0 0 24 24" fill="none" stroke="#020817" stroke-width="2" stroke-linecap="round" stroke-linejoin="round"><circle cx="12" cy="12" r="10"/><path d="M12 16v-4"/><path d="M12 8h.01"/></svg>
<div class="a" style="left:0;top:724px;width:3192px;height:2px;background:#e2e8f0"></div>
<div class="a" style="left:15.60px;letter-spacing:0.728px;top:744.76px;font-size:23.50px;line-height:28px;color:#020817;-webkit-text-stroke:0.25px #020817;">2024-11-22 03:37:02</div>
<div class="a" style="left:308.40px;letter-spacing:0.759px;top:744.76px;font-size:23.50px;line-height:28px;color:#020817;-webkit-text-stroke:0.25px #020817;">dataset-run-item-cm3s4</div>
<div class="a" style="left:608.0px;top:734.0px;width:783.0px;height:48.0px;border:2px solid #e2e8f0;border-radius:6px;background:#fff;"></div>
<div class="a" style="left:626.50px;letter-spacing:0.562px;top:743.66px;font-size:23.50px;line-height:28px;color:#020817;-webkit-text-stroke:0.25px #020817;">{"input":[{"content":"What is the capital of this country? Only answe...</div>
<div class="a" style="left:1409.0px;top:734.0px;width:782.0px;height:48.0px;border:2px solid #e2e8f0;border-radius:6px;background:#f0fdf4;"></div>
<div class="a" style="left:1411.0px;top:735.0px;width:778.0px;height:46px;overflow:hidden">
<div class="a" style="left:16.00px;letter-spacing:0.562px;top:8.66px;font-size:23.50px;line-height:28px;color:#020817;-webkit-text-stroke:0.25px #020817;">{"output":"The capital of Spain is Madrid."}</div>
</div>
<div class="a emo" style="left:2208.2px;top:747.0px"><b></b></div>
<div class="a" style="left:2239.00px;letter-spacing:0.000px;top:744.76px;font-size:23.50px;line-height:28px;color:#020817;-webkit-text-stroke:0.25px #020817;">3</div>
<div class="a" style="left:2509.00px;letter-spacing:0.216px;top:744.76px;font-size:23.50px;line-height:28px;color:#020817;-webkit-text-stroke:0.25px #020817;">0.96s</div>
<div class="a" style="left:2709.40px;letter-spacing:-2.070px;top:744.76px;font-size:23.50px;line-height:28px;color:#020817;-webkit-text-stroke:0.25px #020817;">59</div>
<svg class="a" style="left:2740.0px;top:752.8px;width:18px;height:13px" viewBox="0 0 18 13" fill="none" stroke="#020817" stroke-width="2.1" stroke-linecap="round" stroke-linejoin="round"><path d="M2 6.5h14M11 2 15.8 6.5 11 11"/></svg>
<div class="a" style="left:2766.20px;letter-spacing:-0.149px;top:744.76px;font-size:23.50px;line-height:28px;color:#020817;-webkit-text-stroke:0.25px #020817;">11 (∑ 70)</div><svg class="a" style="left:2870.38px;top:746.50px;width:24px;height:24px" viewBox="0 0 24 24" fill="none" stroke="#020817" stroke-width="2" stroke-linecap="round" stroke-linejoin="round"><circle cx="12" cy="12" r="10"/><path d="M12 16v-4"/><path d="M12 8h.01"/></svg>
<div class="a" style="left:3069.10px;letter-spacing:0.079px;top:744.76px;font-size:23.50px;line-height:28px;color:#020817;-webkit-text-stroke:0.25px #020817;">$0.00046</div>
<svg class="a" style="left:3181.00px;top:746.50px;width:24px;height:24px" viewBox="0 0 24 24" fill="none" stroke="#020817" stroke-width="2" stroke-linecap="round" stroke-linejoin="round"><circle cx="12" cy="12" r="10"/><path d="M12 16v-4"/><path d="M12 8h.01"/></svg>
<div class="a" style="left:0;top:790px;width:3192px;height:2px;background:#e2e8f0"></div>
<div class="a" style="left:15.60px;letter-spacing:0.728px;top:810.76px;font-size:23.50px;line-height:28px;color:#020817;-webkit-text-stroke:0.25px #020817;">2024-11-22 03:37:01</div>
<div class="a" style="left:308.40px;letter-spacing:0.759px;top:810.76px;font-size:23.50px;line-height:28px;color:#020817;-webkit-text-stroke:0.25px #020817;">dataset-run-item-cm3s4</div>
<div class="a" style="left:608.0px;top:800.0px;width:783.0px;height:48.0px;border:2px solid #e2e8f0;border-radius:6px;background:#fff;"></div>
<div class="a" style="left:626.50px;letter-spacing:0.562px;top:809.66px;font-size:23.50px;line-height:28px;color:#020817;-webkit-text-stroke:0.25px #020817;">{"input":[{"content":"What is the capital of this country? Only answe...</div>
<div class="a" style="left:1409.0px;top:800.0px;width:782.0px;height:48.0px;border:2px solid #e2e8f0;border-radius:6px;background:#f0fdf4;"></div>
<div class="a" style="left:1411.0px;top:801.0px;width:778.0px;height:46px;overflow:hidden">
<div class="a" style="left:16.00px;letter-spacing:0.562px;top:8.66px;font-size:23.50px;line-height:28px;color:#020817;-webkit-text-stroke:0.25px #020817;">{"output":"The capital of Brazil is Brasília."}</div>
</div>
<div class="a emo" style="left:2208.2px;top:813.0px"><b></b></div>
<div class="a" style="left:2239.00px;letter-spacing:0.000px;top:810.76px;font-size:23.50px;line-height:28px;color:#020817;-webkit-text-stroke:0.25px #020817;">3</div>
<div class="a" style="left:2509.00px;letter-spacing:0.216px;top:810.76px;font-size:23.50px;line-height:28px;color:#020817;-webkit-text-stroke:0.25px #020817;">0.83s</div>
<div class="a" style="left:2709.40px;letter-spacing:-2.070px;top:810.76px;font-size:23.50px;line-height:28px;color:#020817;-webkit-text-stroke:0.25px #020817;">59</div>
<svg class="a" style="left:2740.0px;top:818.8px;width:18px;height:13px" viewBox="0 0 18 13" fill="none" stroke="#020817" stroke-width="2.1" stroke-linecap="round" stroke-linejoin="round"><path d="M2 6.5h14M11 2 15.8 6.5 11 11"/></svg>
<div class="a" style="left:2766.20px;letter-spacing:-0.149px;top:810.76px;font-size:23.50px;line-height:28px;color:#020817;-webkit-text-stroke:0.25px #020817;">11 (∑ 70)</div><svg class="a" style="left:2870.38px;top:812.50px;width:24px;height:24px" viewBox="0 0 24 24" fill="none" stroke="#020817" stroke-width="2" stroke-linecap="round" stroke-linejoin="round"><circle cx="12" cy="12" r="10"/><path d="M12 16v-4"/><path d="M12 8h.01"/></svg>
<div class="a" style="left:3069.10px;letter-spacing:0.079px;top:810.76px;font-size:23.50px;line-height:28px;color:#020817;-webkit-text-stroke:0.25px #020817;">$0.00046</div>
<svg class="a" style="left:3181.00px;top:812.50px;width:24px;height:24px" viewBox="0 0 24 24" fill="none" stroke="#020817" stroke-width="2" stroke-linecap="round" stroke-linejoin="round"><circle cx="12" cy="12" r="10"/><path d="M12 16v-4"/><path d="M12 8h.01"/></svg>
</div>
<div class="a" style="left:499.60px;letter-spacing:0.894px;top:1992.82px;font-size:26.50px;line-height:32px;color:#020817;-webkit-text-stroke:0.70px #020817;">Sampling</div>
<div class="badge" style="left:635.0px;top:1974.0px">4</div>
<div class="a" style="left:500px;top:2069.5px;width:760px;height:16.5px;border-radius:9px;background:#111827"></div>
<div class="a" style="left:1228px;top:2058px;width:39.4px;height:39.4px;border-radius:50%;background:#fff;border:4px solid #111827"></div>
<div class="a" style="left:1300.0px;top:2046.0px;width:159.0px;height:63.0px;border:2px solid #e2e8f0;border-radius:10px;background:#fff;"></div>
<div class="a" style="left:1357.00px;letter-spacing:0.657px;top:2063.82px;font-size:26.50px;line-height:32px;color:#020817;-webkit-text-stroke:0.40px #020817;">100.00</div>
<div class="a" style="left:1476.00px;letter-spacing:0.000px;top:2063.82px;font-size:26.50px;line-height:32px;color:#64748b;-webkit-text-stroke:0.30px #64748b;">%</div>
</body></html>
